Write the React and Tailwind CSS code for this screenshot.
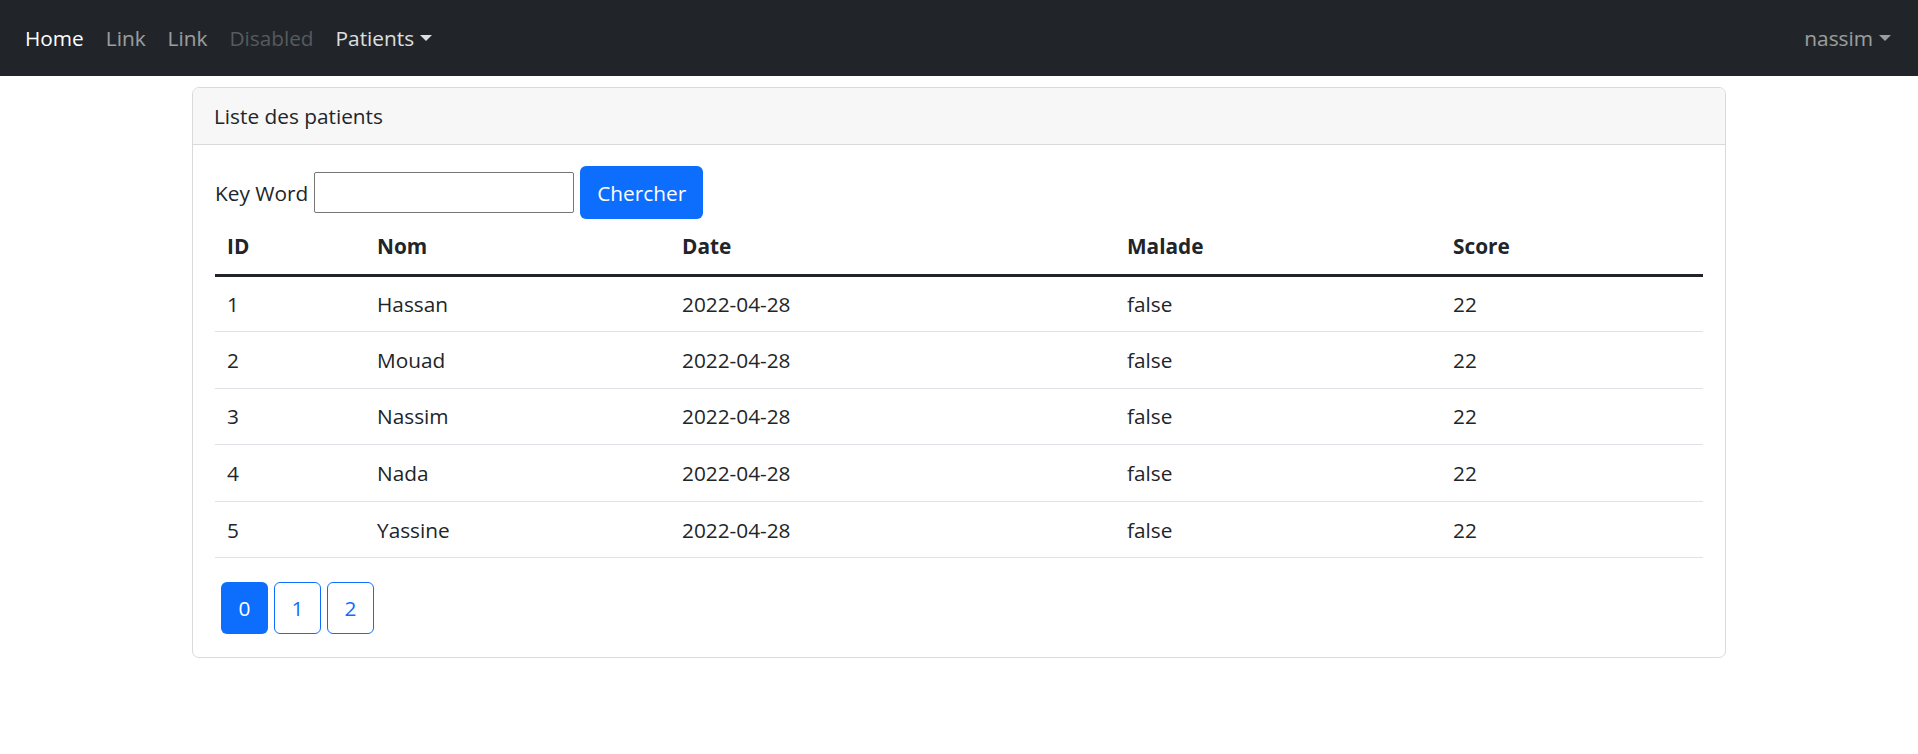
import React from "react";

const rows = [
  { id: 1, nom: "Hassan" },
  { id: 2, nom: "Mouad" },
  { id: 3, nom: "Nassim" },
  { id: 4, nom: "Nada" },
  { id: 5, nom: "Yassine" },
];

function Caret({ className }) {
  return (
    <span
      className={`inline-block ml-[6px] w-0 h-0 border-t-[6px] border-l-[6px] border-r-[6px] border-l-transparent border-r-transparent ${className}`}
    />
  );
}

export default function App() {
  return (
    <div className="min-h-[754px] bg-white text-[#212529] text-[20.8px] leading-[30px]" style={{ fontFamily: '"Open Sans", "Noto Sans", sans-serif' }}>
      <nav className="h-[76px] bg-[#212529] flex items-center justify-between pl-[14px] pr-[27px]">
        <div className="flex items-center">
          <span className="px-[11px] text-white">Home</span>
          <span className="px-[11px] text-white/55">Link</span>
          <span className="px-[11px] text-white/55">Link</span>
          <span className="px-[11px] text-white/25">Disabled</span>
          <span className="px-[11px] text-white/85 flex items-center">
            Patients
            <Caret className="border-t-white/85" />
          </span>
        </div>
        <div className="flex items-center text-white/55">
          nassim
          <Caret className="border-t-white/55" />
        </div>
      </nav>

      <div className="w-[1534px] mx-auto mt-[11px] border border-[#dadada] rounded-[7px] overflow-hidden">
        <div className="h-[57px] bg-[#f7f7f7] border-b border-[#dadada] flex items-center px-[21px]">
          Liste des patients
        </div>
        <div className="px-[22px] pt-[21px] pb-[23px]">
          <div className="flex items-center h-[53px]">
            <span>Key Word</span>
            <input className="ml-[6px] w-[260px] h-[41px] border border-[#767676] rounded-[2px] outline-none" />
            <button className="ml-[6px] w-[123px] h-[53px] bg-[#0d6efd] text-white rounded-[6px]">Chercher</button>
          </div>
          <table className="w-full border-collapse text-left">
            <colgroup>
              <col className="w-[150px]" />
              <col className="w-[305px]" />
              <col className="w-[445px]" />
              <col className="w-[326px]" />
              <col />
            </colgroup>
            <thead>
              <tr className="h-[56px] border-b-[3px] border-[#212529]">
                <th className="pl-[12px] font-bold">ID</th>
                <th className="pl-[12px] font-bold">Nom</th>
                <th className="pl-[12px] font-bold">Date</th>
                <th className="pl-[12px] font-bold">Malade</th>
                <th className="pl-[12px] font-bold">Score</th>
              </tr>
            </thead>
            <tbody>
              {rows.map((r) => (
                <tr key={r.id} className="h-[56.6px] border-b border-[#dee2e6]">
                  <td className="pl-[12px]">{r.id}</td>
                  <td className="pl-[12px]">{r.nom}</td>
                  <td className="pl-[12px]">2022-04-28</td>
                  <td className="pl-[12px]">false</td>
                  <td className="pl-[12px]">22</td>
                </tr>
              ))}
            </tbody>
          </table>
          <div className="flex gap-[6px] ml-[6px] mt-[24px]">
            <button className="w-[47px] h-[52px] rounded-[6px] bg-[#0d6efd] text-white">0</button>
            <button className="w-[47px] h-[52px] rounded-[6px] border border-[#0d6efd] text-[#0d6efd]">1</button>
            <button className="w-[47px] h-[52px] rounded-[6px] border border-[#0d6efd] text-[#0d6efd]">2</button>
          </div>
        </div>
      </div>
    </div>
  );
}
